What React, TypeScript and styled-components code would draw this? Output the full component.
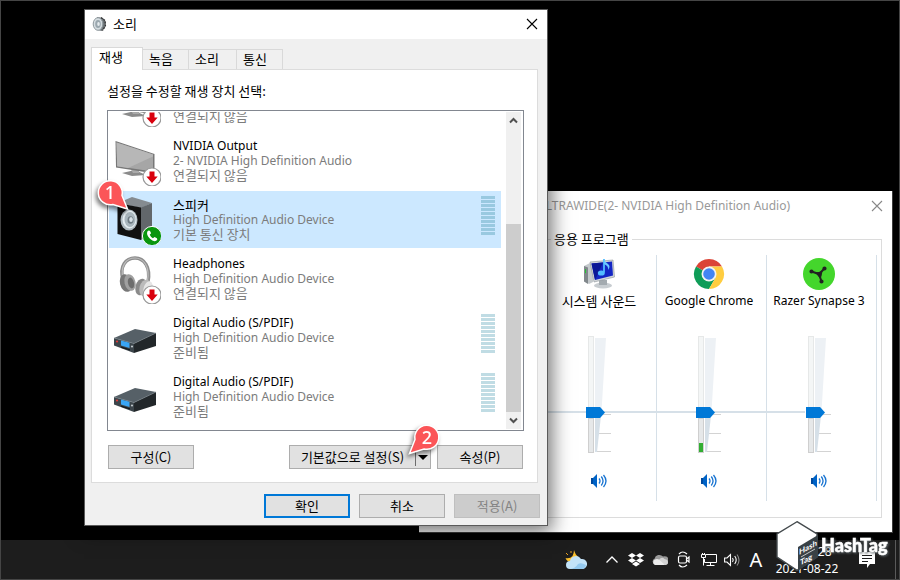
import React from "react";
import styled, { createGlobalStyle, css } from "styled-components";

const latin = `"Noto Sans", "Noto Sans CJK KR", sans-serif`;
const korean = `"Noto Sans CJK KR", "Noto Sans", sans-serif`;

const Global = createGlobalStyle`
  * { box-sizing: border-box; }
  body { margin: 0; background: #000; font: 12px/16px ${latin}; color: #000; }
  button, input, fieldset, legend { font: inherit; color: inherit; margin: 0; padding: 0; }
  h1, h2, p, ul { margin: 0; padding: 0; font-weight: 400; font-size: inherit; list-style: none; }
  svg { display: block; flex: none; }
`;

const Screen = styled.div`
  display: flex;
  flex-direction: column;
  min-height: 100vh;
  border: 1px solid #454545;
  background: #000;
  overflow: hidden;
`;

const Desktop = styled.main`
  position: relative;
  flex: 1;
`;

/* ---------- Sound dialog ---------- */

const SoundDialog = styled.section`
  position: absolute;
  left: 83px;
  top: 8px;
  width: 464px;
  border: 1px solid #5a5a5a;
  background: #f0f0f0;
  box-shadow: 2px 4px 18px 2px rgba(0, 0, 0, 0.55);
`;

const TitleBar = styled.header`
  display: flex;
  align-items: center;
  gap: 6px;
  height: 29px;
  padding: 0 8px 2px 7px;
  background: #fff;
`;

const Title = styled.h1`
  flex: 1;
  font: 13px/16px ${korean};
`;

const CloseButton = styled.button`
  display: grid;
  place-items: center;
  width: 14px;
  height: 14px;
  border: 0;
  background: none;
`;

const DialogBody = styled.div`
  padding: 8px 7px 7px 6px;
`;

const Tabs = styled.div`
  display: flex;
  align-items: flex-end;
`;

const Tab = styled.button<{ $active?: boolean; $width: number }>`
  width: ${(p) => p.$width}px;
  height: 20px;
  padding: 0 4px 2px;
  border: 1px solid #d9d9d9;
  border-width: 1px 1px 0 0;
  background: #f0f0f0;
  font: 13px/16px ${korean};
  text-align: left;
  ${(p) =>
    p.$active
      ? css`
          height: 23px;
          margin-bottom: -1px;
          padding: 0 7px 4px;
          border-left-width: 1px;
          background: #fff;
        `
      : css`
          & + & {
            padding-left: 6px;
          }
        `}
`;

const Panel = styled.div`
  margin-right: 2px;
  padding: 13px 13px 13px 15px;
  border: 1px solid #dcdcdc;
  background: #fff;
`;

const Prompt = styled.p`
  font: 13px/16px ${korean};
`;

const DeviceBox = styled.div`
  display: flex;
  height: 321px;
  margin: 11px 0 14px;
  padding: 1px;
  border: 1px solid #828790;
`;

const DeviceList = styled.ul`
  display: flex;
  flex: 1;
  flex-direction: column;
  justify-content: flex-end;
  padding-bottom: 2px;
  overflow: hidden;
`;

const Device = styled.li<{ $selected?: boolean }>`
  display: flex;
  flex: none;
  gap: 12px;
  height: 57px;
  margin: 0 5px 2px 0;
  padding: 0 6px 0 4px;
  background: ${(p) => (p.$selected ? "#cce8ff" : "transparent")};
`;

const DeviceText = styled.div`
  display: flex;
  flex: 1;
  flex-direction: column;
  justify-content: flex-end;
  padding-bottom: 7px;
`;

const Line = styled.p<{ $muted?: boolean; $korean?: boolean }>`
  color: ${(p) => (p.$muted ? "#7c7c7c" : "#000")};
  font: ${(p) => (p.$korean ? `13px/14px ${korean}` : `12px/15px ${latin}`)};
`;

const Meter = styled.div<{ $selected?: boolean }>`
  display: flex;
  flex-direction: column;
  gap: 1px;
  padding-top: 5px;
  i {
    width: 14px;
    height: 3px;
    background: ${(p) => (p.$selected ? "#99c9e0" : "#c0dce4")};
  }
`;

const ScrollTrack = styled.div`
  display: flex;
  flex-direction: column;
  width: 16px;
  background: #f0f0f0;
  border-right: 1px solid #fff;
`;

const ScrollArrow = styled.button`
  display: grid;
  place-items: center;
  height: 17px;
  border: 0;
  background: none;
`;

const ScrollThumb = styled.div`
  flex: 1;
  margin-top: 95px;
  background: #cdcdcd;
`;

const ButtonRow = styled.div<{ $end?: boolean }>`
  display: flex;
  justify-content: ${(p) => (p.$end ? "flex-end" : "flex-start")};
  gap: ${(p) => (p.$end ? "9px" : "6px")};
  margin: ${(p) => (p.$end ? "11px 0 0" : "0 1px")};
`;

const PushButton = styled.button<{ $default?: boolean }>`
  width: 86px;
  height: 24px;
  border: ${(p) => (p.$default ? "2px solid #0078d7" : "1px solid #adadad")};
  background: #e1e1e1;
  font: 13px/16px ${korean};
  &:disabled {
    border-color: #bfbfbf;
    background: #ccc;
    color: #838383;
  }
`;

const SplitButton = styled.div`
  display: flex;
  width: 142px;
  height: 24px;
  margin-left: auto;
  border: 1px solid #adadad;
  background: #e1e1e1;
  button {
    border: 0;
    background: none;
    font: 13px/16px ${korean};
  }
  button:first-child {
    flex: 1;
  }
  button:last-child {
    display: grid;
    place-items: center;
    width: 15px;
    margin: 2px 0;
    border-left: 1px solid #6d6d6d;
  }
`;

const Callout = styled.svg<{ $x: number; $y: number }>`
  position: absolute;
  left: ${(p) => p.$x}px;
  top: ${(p) => p.$y}px;
  overflow: visible;
  filter: drop-shadow(-2px 3px 2px rgba(0, 0, 0, 0.5));
  pointer-events: none;
`;

/* ---------- Volume mixer ---------- */

const MixerWindow = styled.section`
  position: absolute;
  right: 6px;
  bottom: 7px;
  width: 474px;
  border: 1px solid #3c3c3c;
  border-width: 0 1px 1px 0;
  background: #fff;
`;

const MixerTitleBar = styled.header`
  display: flex;
  align-items: center;
  justify-content: space-between;
  height: 29px;
  padding: 0 8px 0 118px;
  color: #999;
`;

const AppsGroup = styled.fieldset`
  min-width: 0;
  margin: 11px 10px 14px 120px;
  border: 1px solid #dcdcdc;
  legend {
    margin-left: 11px;
    padding: 0 3px;
    font: 13px/16px ${korean};
  }
`;

const Channels = styled.div`
  display: flex;
  justify-content: flex-end;
  padding: 8px 4px 16px 0;
`;

const Channel = styled.div`
  display: flex;
  flex-direction: column;
  align-items: center;
  width: 110px;
  height: 246px;
  padding: 3px 5px 0 0;
  border-right: 1px solid #d6e0e8;
`;

const ChannelName = styled.label<{ $korean?: boolean }>`
  margin: 3px 0 27px;
  white-space: nowrap;
  font: ${(p) => (p.$korean ? `13px/16px ${korean}` : `12px/16px ${latin}`)};
`;

const Fader = styled.div<{ $last?: boolean }>`
  display: grid;
  align-self: stretch;
  justify-content: start;
  margin-right: -5px;
  padding-left: 39px;
  background: linear-gradient(#d6e0e8, #d6e0e8) 0 75px / ${(p) => (p.$last ? "38px" : "100%")} 2px no-repeat;
  > * {
    grid-area: 1 / 1;
  }
`;

const Range = styled.input`
  appearance: none;
  writing-mode: vertical-lr;
  direction: rtl;
  width: 19px;
  height: 117px;
  background: none;
  &::-webkit-slider-runnable-track {
    width: 19px;
    height: 117px;
  }
  &::-webkit-slider-thumb {
    appearance: none;
    width: 19px;
    height: 11px;
    background: #0078d7;
    clip-path: polygon(0 0, 74% 0, 100% 50%, 74% 100%, 0 100%);
  }
`;

const MuteButton = styled.button`
  margin-top: 20px;
  border: 0;
  background: none;
`;

/* ---------- Taskbar ---------- */

const Taskbar = styled.footer`
  display: flex;
  align-items: center;
  justify-content: flex-end;
  height: 39px;
  padding-right: 3px;
  background: #1d1d1d;
  color: #fff;
`;

const Tray = styled.div`
  display: flex;
  align-items: center;
`;

const TrayButton = styled.button<{ $width?: number }>`
  display: grid;
  place-items: center;
  width: ${(p) => p.$width ?? 24}px;
  height: 39px;
  border: 0;
  background: none;
  font: 20px/24px ${latin};
`;

const Clock = styled.time`
  width: 78px;
  margin-right: 9px;
  text-align: center;
  line-height: 17px;
  padding-top: 1px;
`;

const DesktopEdge = styled.div`
  width: 1px;
  height: 39px;
  margin-left: 16px;
  background: #5a5a5a;
`;

const Watermark = styled.svg`
  position: absolute;
  right: 8px;
  bottom: -31px;
  z-index: 1;
  overflow: visible;
  pointer-events: none;
`;

/* ---------- Drawings ---------- */

const Cross = ({ color }: { color: string }) => (
  <svg width="12" height="12" viewBox="0 0 12 12" stroke={color} strokeWidth="1.1">
    <path d="M1 1l10 10M11 1L1 11" />
  </svg>
);

const UnpluggedBadge = () => (
  <g>
    <circle cx="39" cy="42" r="9" fill="#fff" stroke="#999" strokeWidth="1.2" />
    <path d="M36.5 36.5h5v5h3.2L39 48l-5.700-6.500h3.200z" fill="#d9000d" />
  </g>
);

const MonitorIcon = () => (
  <svg width="48" height="54" viewBox="0 -3 48 54">
    <path d="M9 38l13-3 11 5-14 1z" fill="#8b8b8b" />
    <path d="M17 33l9 1v4h-6z" fill="#aaa" />
    <path d="M2.500 6l39 13v19.500L3 32.500z" fill="#777" />
    <path d="M3.500 7.500l36.500 12v17L4.200 31.200z" fill="#a6a6a6" />
    <path d="M3.500 7.500l36.500 12v2L15 33 4.200 31.200z" fill="#b7b7b7" />
    <UnpluggedBadge />
  </svg>
);

const SpeakerIcon = () => (
  <svg width="48" height="54" viewBox="0 -3 48 54">
    <path d="M5 9l14-6 20 6-11 5z" fill="#858b90" />
    <path d="M28 13.500L39 9v31l-11 6z" fill="#62676b" />
    <path d="M4.500 9L28 13.500V46L4.500 40z" fill="#111" />
    <ellipse cx="16" cy="26" rx="8.500" ry="10.500" fill="#aeb9bf" />
    <ellipse cx="16.500" cy="25.500" rx="7" ry="9" fill="#e5edf1" />
    <ellipse cx="17" cy="25.500" rx="5.500" ry="7.500" fill="#aab7be" />
    <ellipse cx="17.500" cy="26" rx="3" ry="3.800" fill="#6d7a82" />
    <ellipse cx="18" cy="25.500" rx="1.800" ry="2.500" fill="#d7e1e7" />
    <circle cx="39" cy="42" r="9.600" fill="#0a960f" stroke="#fff" strokeWidth="1" />
    <path d="M34.500 37.200q1.600-1.600 2.800.2l.8 1.800-1.400 1.600q1 2.300 3.200 3.400l1.700-1.200 2.300 1.300q1.200 1-.7 2.500-2.600 1.600-6.200-2-4.200-4.300-2.500-7.600z" fill="#fff" />
  </svg>
);

const HeadphonesIcon = () => (
  <svg width="48" height="54" viewBox="0 -3 48 54">
    <path d="M10 27C6 13 13 5 22 5s16 9 13 24" fill="none" stroke="#8d8d8d" strokeWidth="3.400" />
    <path d="M10 26C7 13 13 5 22 5s15 9 12.500 23" fill="none" stroke="#bdbdbd" strokeWidth="1.200" />
    <ellipse cx="13" cy="30" rx="6" ry="9" transform="rotate(-14 13 30)" fill="#777" />
    <ellipse cx="17" cy="29.500" rx="5.500" ry="8.500" transform="rotate(-14 17 29.500)" fill="#a0a0a0" />
    <ellipse cx="18" cy="30" rx="3" ry="5.500" transform="rotate(-14 18 30)" fill="#6d6d6d" />
    <ellipse cx="28" cy="34" rx="5.500" ry="8.500" transform="rotate(14 28 34)" fill="#8a8a8a" />
    <ellipse cx="32" cy="35" rx="5.500" ry="8.500" transform="rotate(14 32 35)" fill="#bbb" />
    <ellipse cx="35" cy="36" rx="4.500" ry="8" transform="rotate(14 35 36)" fill="#e6e6e6" />
    <UnpluggedBadge />
  </svg>
);

const ReceiverIcon = () => (
  <svg width="48" height="54" viewBox="0 -3 48 54">
    <path d="M1 26l21-9 21 4-22 10.500z" fill="#566067" />
    <path d="M21 31.500L43 21v13L21 41z" fill="#22272a" />
    <path d="M1 26l20 5.500V41L1 33.500z" fill="#3c454b" />
    <path d="M1 26l20 5.500L43 21" fill="none" stroke="#7b868d" strokeWidth=".6" />
    <path d="M8 28.500l8.500 2.200v5.200L8 33.500z" fill="#39a5f5" />
    <path d="M8 34.500l9 2.800v1.200l-9-2.800z" fill="#14181b" />
    <circle cx="4" cy="29.500" r="1.100" fill="#e03c3c" />
    <circle cx="19" cy="34.500" r="1.100" fill="#bfc6ca" />
  </svg>
);

const DialogIcon = () => (
  <svg width="15" height="16" viewBox="0 0 15 16">
    <path d="M5 1l6 1 3 4-1 6-3 3-5-1z" fill="#6d7478" />
    <path d="M9 1.500l4 3 .5 5-3 5" fill="none" stroke="#333" strokeWidth="1.200" strokeDasharray="2 1" />
    <ellipse cx="6" cy="8" rx="4.800" ry="6.300" fill="#d5dde1" stroke="#8f999e" />
    <ellipse cx="6" cy="8" rx="2.800" ry="4" fill="#9aa7ae" />
    <ellipse cx="6.500" cy="8" rx="1.300" ry="2" fill="#e5ebee" />
  </svg>
);

const SystemSoundIcon = () => (
  <svg width="32" height="32" viewBox="0 0 32 32">
    <path d="M1 8l6-3 3 3v16l-4 2-5-3z" fill="#c4c9cc" />
    <path d="M1 8l4 1.500V26l-4-2.500z" fill="#81888c" />
    <path d="M2 11l1 .3v4l-1-.3z" fill="#25c632" />
    <ellipse cx="20" cy="27.500" rx="9" ry="3" fill="#c8cdd1" />
    <path d="M16 22h8v5h-8z" fill="#a4abb0" />
    <path d="M7 4l23-2 1.500 17L11 24z" fill="#d2d7da" stroke="#8d9499" strokeWidth=".6" />
    <path d="M8.500 5.500L29 3.500l1 14-18 4.500z" fill="#1426c4" />
    <path d="M8.500 5.500L20 4.500 12 22z" fill="#0b1796" />
    <path d="M21 1v13.500" stroke="#53bcff" strokeWidth="1.800" />
    <ellipse cx="18.300" cy="15" rx="3.500" ry="2.600" fill="#53bcff" />
    <path d="M21 1q1 3 4 5t0 6q1-4-4-6z" fill="#6bc9ff" />
  </svg>
);

const ChromeIcon = () => (
  <svg width="32" height="32" viewBox="0 0 32 32">
    <path d="M16 16L3 8.500A15 15 0 0 1 29 8.500L16 8.500z" fill="#db4437" />
    <path d="M16 16L3 8.500A15 15 0 0 0 16 31l6.500-11.200z" fill="#0f9d58" />
    <path d="M16 16V8.500h13A15 15 0 0 1 16 31l6.500-11.300z" fill="#ffcd40" />
    <circle cx="16" cy="16" r="7.500" fill="#f4f4f4" />
    <circle cx="16" cy="16" r="5.800" fill="#4285f4" />
  </svg>
);

const RazerIcon = () => (
  <svg width="32" height="32" viewBox="0 0 32 32">
    <circle cx="16" cy="16" r="16" fill="#44d62c" />
    <g stroke="#222" strokeWidth="2" fill="#222">
      <path d="M8.500 13.500L16 16l5.500-5.500M16 16l2.500 7.500" fill="none" />
      <path d="M13.500 15l3-.5 2-.5-.5 3-.8 2.500z" strokeWidth="1.500" />
      <circle cx="8.500" cy="13.500" r="1.100" />
      <circle cx="21.500" cy="10.500" r="1.100" />
      <circle cx="18.500" cy="23.500" r="1.100" />
    </g>
  </svg>
);

const FaderArt = ({ level }: { level: boolean }) => (
  <svg width="26" height="117" viewBox="0 0 26 117">
    <path d="M9 78.500h16M9 97.500h16M9 115.500h16" stroke="#d3d3d3" />
    <path d="M9 2h11L15.500 75H9z" fill="#edf1f5" />
    <path d="M9 75h6.500L11 116H9z" fill="#d6e0e8" />
    <path d="M0 74h3v10H0z" fill="#fff" />
    <rect x="2.500" y=".5" width="5" height="116" fill="#f4f6f6" stroke="#e6e8e8" />
    <rect x="2.500" y="82.500" width="5" height="34" fill="#e6e8e9" stroke="#cfcfcf" />
    {level && <rect x="3" y="107" width="4" height="9" fill="#32ae32" />}
  </svg>
);

const BlueVolume = () => (
  <svg width="16" height="16" viewBox="0 0 16 16">
    <path d="M0 5h2L6 1v14L2 11H0z" fill="#0063c6" />
    <path d="M0 5h2v6H0z" fill="#00499d" />
    <path d="M8 5.500q2 2.500 0 5M10.300 3.500q3.500 4.500 0 9M12.500 2q5 6 0 12" fill="none" stroke="#1673d1" strokeWidth="1.300" />
  </svg>
);

const Weather = () => (
  <svg width="24" height="24" viewBox="0 0 24 24">
    <path d="M10 2q1.500 5 4 6.500-2 6-7 5.500-4 0-5.500-4Q6 11 8.500 8 10 5 10 2z" fill="#fbc02d" />
    <path d="M2 5l2 2M7 3v2" stroke="#e8a020" />
    <path d="M6 21a4 4 0 0 1 0-8 6 6 0 0 1 11-2 5 5 0 0 1 2 10z" fill="#c3e3f8" />
    <path d="M5 21q6 0 9-5 3-2 8 1-1 4-4 4z" fill="#94c9ef" />
  </svg>
);

const Dropbox = () => (
  <svg width="16" height="14" viewBox="0 0 16 14" fill="#fff">
    <path d="M4 0l4 2.500L4 5 0 2.500zM12 0l4 2.500L12 5 8 2.500zM4 5l4 2.500L4 10 0 7.500zM12 5l4 2.500L12 10 8 7.500zM8 8.500l4 2.500-4 2.500L4 11z" />
  </svg>
);

const Cloud = () => (
  <svg width="16" height="11" viewBox="0 0 16 11">
    <path d="M3 10.500A3 3 0 0 1 2.500 4.800 5 5 0 0 1 11 2.500a4 4 0 0 1 3 8z" fill="#9a9a9a" />
    <path d="M3 11a3 3 0 0 1 0-5.500q2-1 4 0L14 8q0 3-2 3z" fill="#ececec" />
    <path d="M7 5.500q3-3 5.500-.5 3.500.500 3.500 3.300T13 11z" fill="#d3d3d3" />
  </svg>
);

const MeetNow = () => (
  <svg width="14" height="17" viewBox="0 0 14 17" fill="none" stroke="#fff" strokeWidth="1.200">
    <rect x="1.500" y="5" width="8" height="7" rx="1.500" />
    <path d="M9.500 8l2.500-2v5l-2.500-2M2 3q3.500-4 8 0M2 14q3.500 4 8 0" />
  </svg>
);

const Network = () => (
  <svg width="17" height="15" viewBox="0 0 17 15" fill="none" stroke="#fff">
    <path d="M6 2.500h10.500v8H4.500V7M10.500 10.500v3M6.500 13.500h8M1.500 2.500h4v3h-4zM2.500 1v1.500M4.500 1v1.500M3.500 5.500v8" />
  </svg>
);

const TrayVolume = () => (
  <svg width="17" height="14" viewBox="0 0 17 14" fill="none" stroke="#fff" strokeWidth="1.100">
    <path d="M.6 5H3l3.500-3.500v11L3 9H.6zM8.500 5q1.500 2 0 4M10.700 3q3 4 0 8" />
    <path d="M13 1.500q4 5.500 0 11" stroke="#8a8a8a" />
  </svg>
);

const Notification = () => (
  <svg width="16" height="16" viewBox="0 0 16 16">
    <path d="M0 0h16v12h-5l-3 4v-4H0z" fill="#fff" />
    <path d="M3 3.500h10M3 6.500h10M3 9.500h6" stroke="#1d1d1d" />
  </svg>
);

const Chevron = ({ up }: { up?: boolean }) => (
  <svg width="9" height="7" viewBox="0 0 9 7" fill="none" stroke="#505050" strokeWidth="2">
    <path d={up ? "M1 5.500L4.500 2 8 5.500" : "M1 1.500L4.500 5 8 1.500"} />
  </svg>
);

const HashTagMark = () => (
  <Watermark width="115" height="50" viewBox="0 0 115 50" role="img" aria-label="HashTag">
    <path d="M21 .7L41 13v23L21 49.300 1 36V13z" fill="#fff" stroke="#444a4d" strokeWidth="1.400" />
    <path d="M42 14v22L22 49.500V26z" fill="#394145" />
    <g fill="#fff" fontFamily="Lato, sans-serif" fontSize="8" fontWeight="700">
      <g transform="translate(23 34) skewY(-28)">
        <text x="0" y="0">Hash</text>
        <text x="1" y="11">Tag</text>
      </g>
    </g>
    <path d="M25 36l14-8" stroke="#fff" strokeWidth=".7" />
    <text
      x="45"
      y="31"
      fontFamily="Lato, sans-serif"
      fontSize="18"
      fontWeight="900"
      fill="#fff"
      stroke="#fff"
      strokeWidth=".5"
      style={{ filter: "drop-shadow(1px 1px 1px #5a6265)" }}
    >
      HashTag
    </text>
  </Watermark>
);

/* ---------- Data ---------- */

interface DeviceInfo {
  name?: string;
  driver?: string;
  status: string;
  icon: React.ReactNode;
  selected?: boolean;
  meter?: boolean;
}

const devices: DeviceInfo[] = [
  { status: "연결되지 않음", icon: <MonitorIcon /> },
  { name: "NVIDIA Output", driver: "2- NVIDIA High Definition Audio", status: "연결되지 않음", icon: <MonitorIcon /> },
  { name: "스피커", driver: "High Definition Audio Device", status: "기본 통신 장치", icon: <SpeakerIcon />, selected: true, meter: true },
  { name: "Headphones", driver: "High Definition Audio Device", status: "연결되지 않음", icon: <HeadphonesIcon /> },
  { name: "Digital Audio (S/PDIF)", driver: "High Definition Audio Device", status: "준비됨", icon: <ReceiverIcon />, meter: true },
  { name: "Digital Audio (S/PDIF)", driver: "High Definition Audio Device", status: "준비됨", icon: <ReceiverIcon />, meter: true },
];

const channels = [
  { id: "system", name: "시스템 사운드", icon: <SystemSoundIcon />, korean: true },
  { id: "chrome", name: "Google Chrome", icon: <ChromeIcon />, level: true },
  { id: "razer", name: "Razer Synapse 3", icon: <RazerIcon /> },
];

const tabs = [
  { name: "재생", width: 52 },
  { name: "녹음", width: 46 },
  { name: "소리", width: 48 },
  { name: "통신", width: 46 },
];

/* ---------- Page ---------- */

const Mixer = () => (
  <MixerWindow>
    <MixerTitleBar>
      <h2>ULTRAWIDE(2- NVIDIA High Definition Audio)</h2>
      <CloseButton aria-label="닫기">
        <Cross color="#888" />
      </CloseButton>
    </MixerTitleBar>
    <AppsGroup>
      <legend>응용 프로그램</legend>
      <Channels>
        {channels.map((c, i) => (
          <Channel key={c.id}>
            {c.icon}
            <ChannelName htmlFor={c.id} $korean={c.korean}>
              {c.name}
            </ChannelName>
            <Fader $last={i === channels.length - 1}>
              <FaderArt level={!!c.level} />
              <Range id={c.id} type="range" min={0} max={100} defaultValue={33} />
            </Fader>
            <MuteButton aria-label={`${c.name} 음소거`}>
              <BlueVolume />
            </MuteButton>
          </Channel>
        ))}
      </Channels>
    </AppsGroup>
  </MixerWindow>
);

const Sound = () => (
  <SoundDialog role="dialog" aria-labelledby="sound-title">
    <TitleBar>
      <DialogIcon />
      <Title id="sound-title">소리</Title>
      <CloseButton aria-label="닫기">
        <Cross color="#000" />
      </CloseButton>
    </TitleBar>
    <DialogBody>
      <Tabs role="tablist">
        {tabs.map((t, i) => (
          <Tab key={t.name} role="tab" aria-selected={i === 0} $active={i === 0} $width={t.width}>
            {t.name}
          </Tab>
        ))}
      </Tabs>
      <Panel role="tabpanel">
        <Prompt>설정을 수정할 재생 장치 선택:</Prompt>
        <DeviceBox>
          <DeviceList>
            {devices.map((d, i) => (
              <Device key={i} $selected={d.selected}>
                {d.icon}
                <DeviceText>
                  {d.name && <Line $korean={d.selected}>{d.name}</Line>}
                  {d.driver && <Line $muted>{d.driver}</Line>}
                  <Line $muted $korean>
                    {d.status}
                  </Line>
                </DeviceText>
                {d.meter && (
                  <Meter $selected={d.selected}>
                    {Array.from({ length: 10 }, (_, n) => (
                      <i key={n} />
                    ))}
                  </Meter>
                )}
              </Device>
            ))}
          </DeviceList>
          <ScrollTrack>
            <ScrollArrow aria-label="위로">
              <Chevron up />
            </ScrollArrow>
            <ScrollThumb />
            <ScrollArrow aria-label="아래로">
              <Chevron />
            </ScrollArrow>
          </ScrollTrack>
        </DeviceBox>
        <ButtonRow>
          <PushButton>구성(C)</PushButton>
          <SplitButton>
            <button>기본값으로 설정(S)</button>
            <button aria-label="기본값 옵션">
              <svg width="10" height="5" viewBox="0 0 10 5">
                <path d="M0 0h10L5 5z" />
              </svg>
            </button>
          </SplitButton>
          <PushButton>속성(P)</PushButton>
        </ButtonRow>
      </Panel>
      <ButtonRow $end>
        <PushButton $default>확인</PushButton>
        <PushButton>취소</PushButton>
        <PushButton disabled>적용(A)</PushButton>
      </ButtonRow>
    </DialogBody>
  </SoundDialog>
);

export default function App() {
  return (
    <Screen>
      <Global />
      <Desktop>
        <Mixer />
        <Sound />
        <Callout $x={96} $y={179} width="32" height="32" viewBox="0 0 32 32">
          <path d="M30.500 29L25 15.500A12 12 0 1 0 16 24.500z" fill="#fb5558" stroke="#fff" strokeWidth="1.500" />
          <text x="13" y="18.500" textAnchor="middle" fontFamily={latin} fontSize="18" fontWeight="500" fill="#fff">
            1
          </text>
        </Callout>
        <Callout $x={407} $y={423} width="32" height="32" viewBox="0 0 32 32">
          <path d="M1.500 29.500L7 15.500A12 12 0 1 1 16 25z" fill="#fb5558" stroke="#fff" strokeWidth="1.500" />
          <text x="19" y="20" textAnchor="middle" fontFamily={latin} fontSize="18" fontWeight="500" fill="#fff">
            2
          </text>
        </Callout>
        <HashTagMark />
      </Desktop>
      <Taskbar>
        <Tray>
          <TrayButton $width={48} aria-label="날씨">
            <Weather />
          </TrayButton>
          <TrayButton aria-label="숨겨진 아이콘 표시">
            <svg width="12" height="7" viewBox="0 0 12 7" fill="none" stroke="#fff" strokeWidth="1.300">
              <path d="M.5 6.500L6 1l5.500 5.500" />
            </svg>
          </TrayButton>
          <TrayButton aria-label="Dropbox">
            <Dropbox />
          </TrayButton>
          <TrayButton aria-label="OneDrive">
            <Cloud />
          </TrayButton>
          <TrayButton aria-label="지금 모임 시작">
            <MeetNow />
          </TrayButton>
          <TrayButton aria-label="네트워크">
            <Network />
          </TrayButton>
          <TrayButton aria-label="볼륨">
            <TrayVolume />
          </TrayButton>
          <TrayButton>A</TrayButton>
        </Tray>
        <Clock>
          오후 1:28
          <br />
          2021-08-22
        </Clock>
        <TrayButton aria-label="알림">
          <Notification />
        </TrayButton>
        <DesktopEdge />
      </Taskbar>
    </Screen>
  );
}
